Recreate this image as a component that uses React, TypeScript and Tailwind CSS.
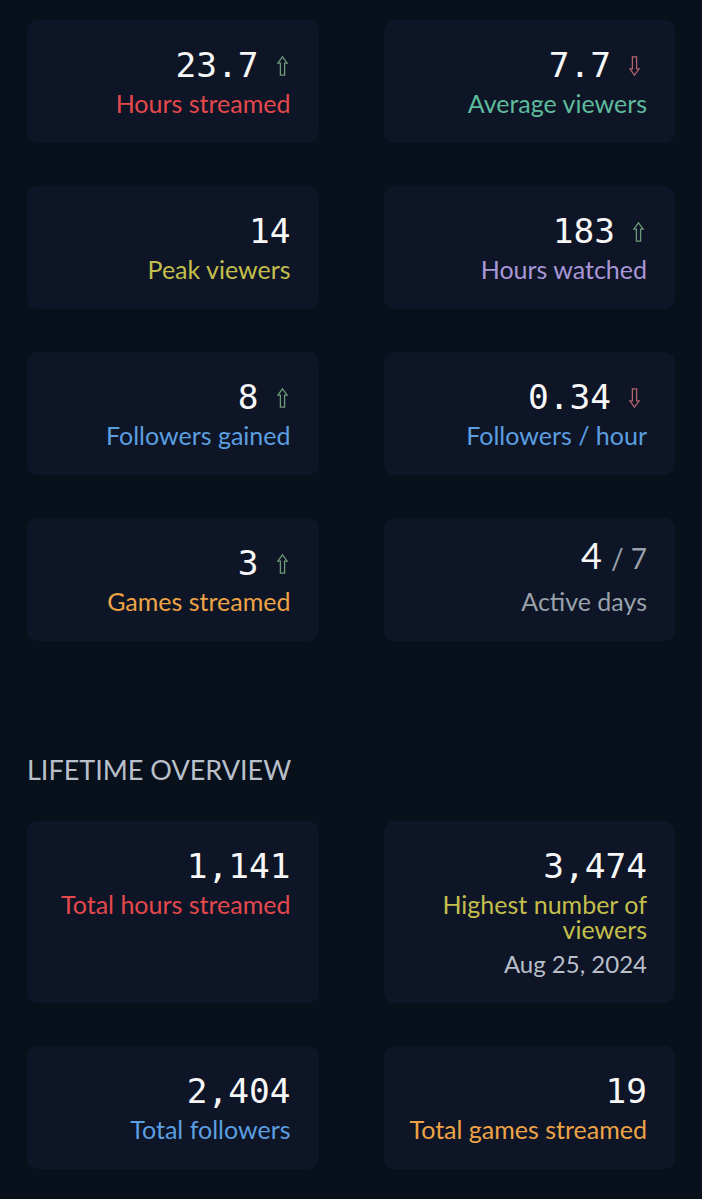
import React from 'react'

type Trend = 'up' | 'down' | null

interface Stat {
  value: string
  label: string
  color: string
  trend?: Trend
  suffix?: string
  note?: string
}

const WEEK: Stat[] = [
  { value: '23.7', label: 'Hours streamed', color: 'text-[#e5484d]', trend: 'up' },
  { value: '7.7', label: 'Average viewers', color: 'text-[#5fbb9c]', trend: 'down' },
  { value: '14', label: 'Peak viewers', color: 'text-[#c4bf4c]' },
  { value: '183', label: 'Hours watched', color: 'text-[#a996d6]', trend: 'up' },
  { value: '8', label: 'Followers gained', color: 'text-[#5b9fe0]', trend: 'up' },
  { value: '0.34', label: 'Followers / hour', color: 'text-[#5b9fe0]', trend: 'down' },
  { value: '3', label: 'Games streamed', color: 'text-[#eda346]', trend: 'up' },
  { value: '4', label: 'Active days', color: 'text-[#99a1ab]', suffix: '/ 7' },
]

const LIFETIME: Stat[] = [
  { value: '1,141', label: 'Total hours streamed', color: 'text-[#e5484d]' },
  { value: '3,474', label: 'Highest number of viewers', color: 'text-[#c4bf4c]', note: 'Aug 25, 2024' },
  { value: '2,404', label: 'Total followers', color: 'text-[#5b9fe0]' },
  { value: '19', label: 'Total games streamed', color: 'text-[#eda346]' },
]

function Arrow({ dir }: { dir: 'up' | 'down' }) {
  const up = dir === 'up'
  return (
    <svg
      width="11"
      height="20"
      viewBox="0 0 11 20"
      className={up ? 'ml-[18px] mr-[3px]' : 'ml-[18px] mr-[7px]'}
      fill="none"
      stroke={up ? '#6e9a78' : '#b2636c'}
      strokeWidth="1.3"
      strokeLinejoin="miter"
    >
      {up ? (
        <path d="M5.5 0.8 L10.2 7.2 H7.6 V19.2 H3.4 V7.2 H0.8 Z" />
      ) : (
        <path d="M5.5 19.2 L10.2 12.8 H7.6 V0.8 H3.4 V12.8 H0.8 Z" />
      )}
    </svg>
  )
}

function StatCard({ stat }: { stat: Stat }) {
  return (
    <div className="rounded-[10px] bg-[#0d1526] pt-[25px] pb-[27px] pl-4 pr-[28px] flex flex-col items-end text-right">
      <div className="flex items-end h-[40px]">
        {stat.suffix ? (
          <span className="font-['Lato',sans-serif] leading-[40px]">
            <span className="text-[36px] text-[#f7f7f7]">{stat.value}</span>
            <span className="text-[28px] text-[#9aa1aa] ml-[9px]">{stat.suffix}</span>
          </span>
        ) : (
          <span className="font-['DejaVu_Sans_Mono',monospace] text-[34.5px] leading-[40px] text-[#f7f7f7]">
            {stat.value}
          </span>
        )}
        {stat.trend && <span className="self-center mt-[2px] flex"><Arrow dir={stat.trend} /></span>}
      </div>
      <div className={`mt-[6px] font-['Lato',sans-serif] text-[25px] leading-[25px] ${stat.color}`}>
        {stat.label}
      </div>
      {stat.note && (
        <div className="mt-[9px] font-['Lato',sans-serif] text-[24px] leading-[25px] text-[#b9bfc8]">
          {stat.note}
        </div>
      )}
    </div>
  )
}

export default function App() {
  return (
    <div className="min-h-[1199px] bg-[#08101c] px-[27px] pt-[20px] pb-[30px]">
      <div className="grid grid-cols-2 gap-x-[65px] gap-y-[43px]">
        {WEEK.map((s) => (
          <StatCard key={s.label} stat={s} />
        ))}
      </div>

      <h2 className="mt-[113px] font-['Lato',sans-serif] text-[27px] leading-[32px] text-[#b9c0ca] uppercase">
        Lifetime overview
      </h2>

      <div className="mt-[35px] grid grid-cols-2 gap-x-[65px] gap-y-[43px]">
        {LIFETIME.map((s) => (
          <StatCard key={s.label} stat={s} />
        ))}
      </div>
    </div>
  )
}
